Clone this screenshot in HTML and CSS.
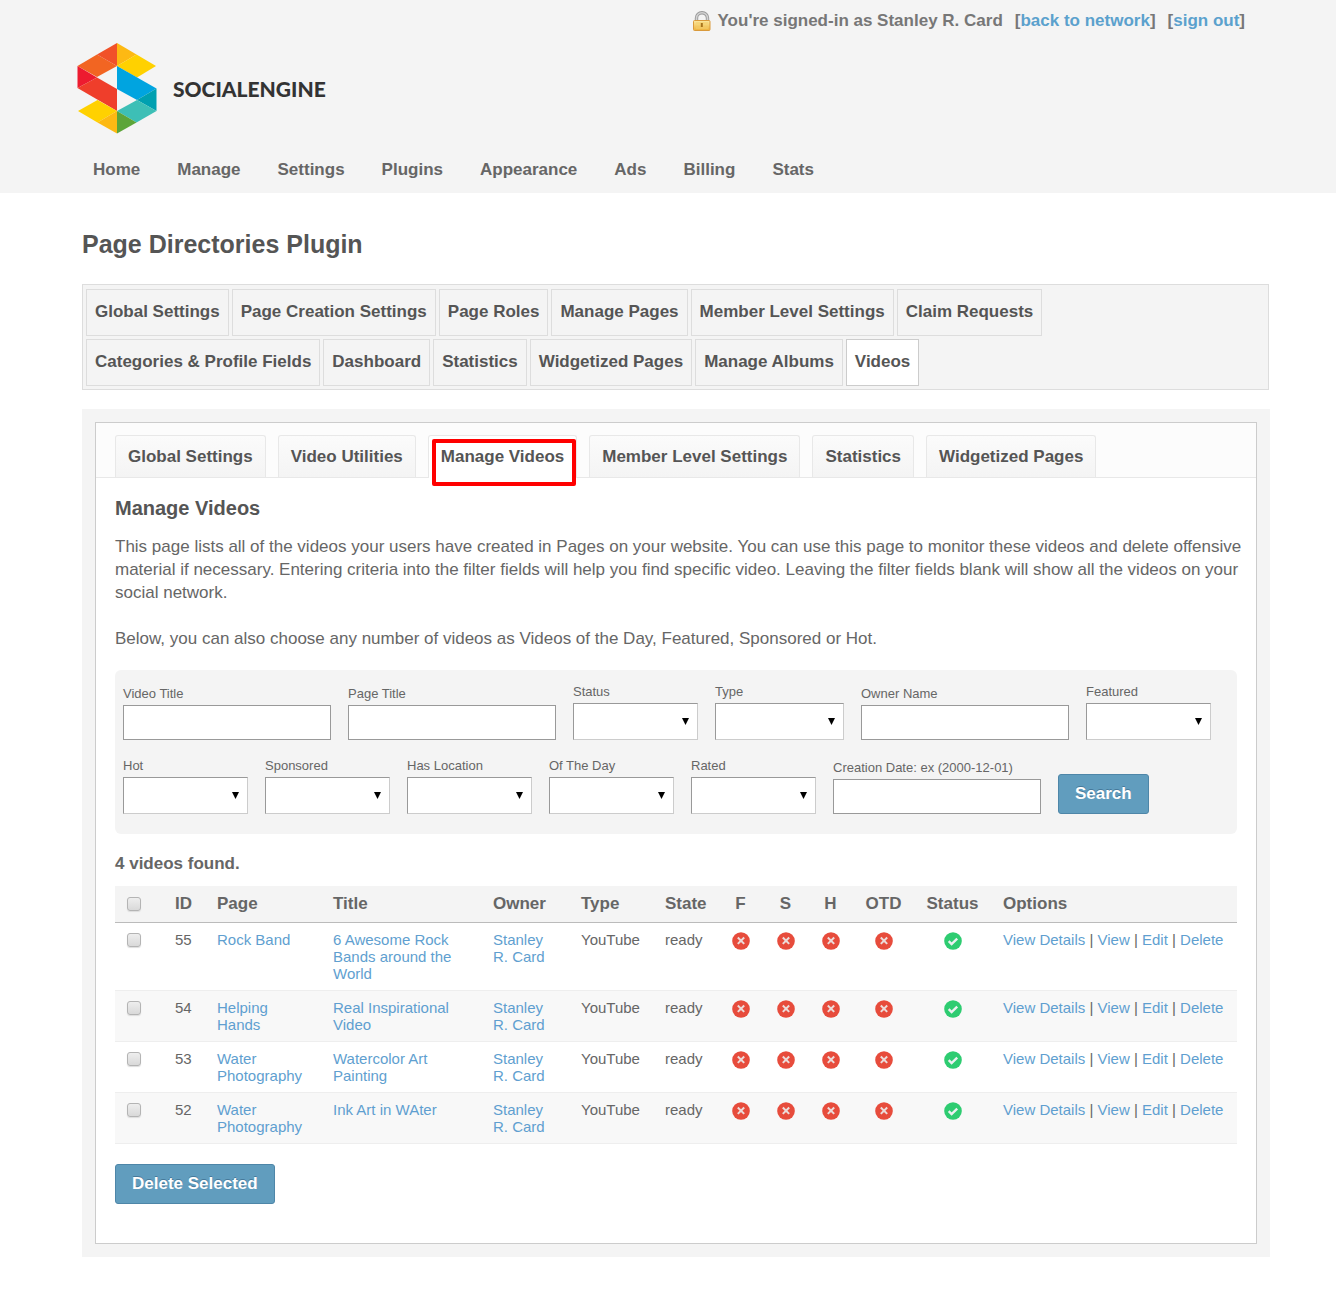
FILE: index.html
```html
<!DOCTYPE html>
<html lang="en">
<head>
  <meta charset="UTF-8">
  <meta name="viewport" content="width=device-width, initial-scale=1.0">
  <title>Page Directories Plugin - Manage Videos</title>
  <link rel="stylesheet" href="styles.css">
</head>
<body>

<!-- Icons used in the page -->
<svg class="sprite" aria-hidden="true">
  <linearGradient id="gold" x1="0" y1="0" x2="0" y2="1">
    <stop offset="0" stop-color="#fbe9a0"/>
    <stop offset="1" stop-color="#eeb13c"/>
  </linearGradient>
  <symbol id="no" viewBox="0 0 18 18">
    <circle cx="9" cy="9" r="8.8" fill="#e74c3c"/>
    <path d="M5.8 5.5l6.4 6.4M12.2 5.5l-6.4 6.4" stroke="#ecdcda" stroke-width="2" fill="none"/>
  </symbol>
  <symbol id="yes" viewBox="0 0 18 18">
    <circle cx="9" cy="9" r="8.8" fill="#2ecc71"/>
    <path d="M4.7 9.2l2.9 2.9 5.6-5.4" stroke="#ecf0f1" stroke-width="2.4" fill="none"/>
  </symbol>
</svg>

<header class="header">
  <div class="wrap">
    <div class="account">
      <svg class="lock" width="20" height="20" viewBox="0 0 20 20" aria-hidden="true">
        <path d="M4.5 11V7a5.5 5.3 0 0 1 11 0v4" fill="none" stroke="#999" stroke-width="3.4"/>
        <path d="M4.5 11V7a5.5 5.3 0 0 1 11 0v4" fill="none" stroke="#d2d2d2" stroke-width="1.6"/>
        <rect x="1.5" y="9.5" width="16.5" height="10" rx="1" fill="url(#gold)" stroke="#d99a3c"/>
        <path d="M4 12h12M4 14.500h12M4 17h12" stroke="#f3cf6c" stroke-width="1"/>
        <path d="M9.800 12v4" stroke="#a8741c" stroke-width="2"/>
      </svg>
      <span class="user">You're signed-in as Stanley R. Card</span>
      <span>[<a href="#">back to network</a>]</span>
      <span>[<a href="#">sign out</a>]</span>
    </div>
    <a class="logo" href="#">
      <svg width="80" height="92" viewBox="0 0 80 92" aria-hidden="true">
        <path d="M0.500 24L20 12.500 40 24 20 35z" fill="#f26522"/>
        <path d="M20 12.500L40 1v23z" fill="#f15129"/>
        <path d="M40 1l19.500 11.500L40 24z" fill="#fdb913"/>
        <path d="M59.500 12.500L79 24 60 35.500 40 24z" fill="#ffd100"/>
        <path d="M0.500 24L20 35.500 0.500 46z" fill="#ed1b2f"/>
        <path d="M20 35.500L40 47v22L0.500 46z" fill="#ef3e2b"/>
        <path d="M40 24l39.500 22.500L60 58 40 47z" fill="#00a4e0"/>
        <path d="M79.500 46.500V69L60 58z" fill="#00a0b0"/>
        <path d="M60 58l19.500 11L59.500 80.500 40 69z" fill="#3dbfb6"/>
        <path d="M20.500 58L40 69 20.500 80.500 1 69z" fill="#ffd100"/>
        <path d="M40 69v22.500l-19.500-11z" fill="#fdb913"/>
        <path d="M40 69l19.500 11.500L40 91.500z" fill="#5ca539"/>
      </svg>
      <span>SOCIALENGINE</span>
    </a>
    <nav class="main-menu">
      <a href="#">Home</a>
      <a href="#">Manage</a>
      <a href="#">Settings</a>
      <a href="#">Plugins</a>
      <a href="#">Appearance</a>
      <a href="#">Ads</a>
      <a href="#">Billing</a>
      <a href="#">Stats</a>
    </nav>
  </div>
</header>

<main class="wrap">
  <h1>Page Directories Plugin</h1>

  <nav class="plugin-menu">
    <div class="menu-row">
      <a href="#">Global Settings</a>
      <a href="#">Page Creation Settings</a>
      <a href="#">Page Roles</a>
      <a href="#">Manage Pages</a>
      <a href="#">Member Level Settings</a>
      <a href="#">Claim Requests</a>
    </div>
    <div class="menu-row">
      <a href="#">Categories &amp; Profile Fields</a>
      <a href="#">Dashboard</a>
      <a href="#">Statistics</a>
      <a href="#">Widgetized Pages</a>
      <a href="#">Manage Albums</a>
      <a href="#" class="active">Videos</a>
    </div>
  </nav>

  <div class="outer">
    <div class="panel">
      <nav class="tabs">
        <a href="#">Global Settings</a>
        <a href="#">Video Utilities</a>
        <a href="#" class="active">Manage Videos</a>
        <a href="#">Member Level Settings</a>
        <a href="#">Statistics</a>
        <a href="#">Widgetized Pages</a>
      </nav>

      <div class="content">
        <h2>Manage Videos</h2>
        <p>This page lists all of the videos your users have created in Pages on your website. You can use this page to monitor these videos and delete offensive material if necessary. Entering criteria into the filter fields will help you find specific video. Leaving the filter fields blank will show all the videos on your social network.</p>
        <p>Below, you can also choose any number of videos as Videos of the Day, Featured, Sponsored or Hot.</p>

        <!-- Filter form -->
        <form class="filters">
          <div class="field">
            <label for="video-title">Video Title</label>
            <input type="text" id="video-title">
          </div>
          <div class="field">
            <label for="page-title">Page Title</label>
            <input type="text" id="page-title">
          </div>
          <div class="field">
            <label for="status">Status</label>
            <select id="status"><option></option></select>
          </div>
          <div class="field">
            <label for="type">Type</label>
            <select id="type" class="wide"><option></option></select>
          </div>
          <div class="field">
            <label for="owner">Owner Name</label>
            <input type="text" id="owner">
          </div>
          <div class="field">
            <label for="featured">Featured</label>
            <select id="featured"><option></option></select>
          </div>
          <div class="field">
            <label for="hot">Hot</label>
            <select id="hot"><option></option></select>
          </div>
          <div class="field">
            <label for="sponsored">Sponsored</label>
            <select id="sponsored"><option></option></select>
          </div>
          <div class="field">
            <label for="location">Has Location</label>
            <select id="location"><option></option></select>
          </div>
          <div class="field">
            <label for="otd">Of The Day</label>
            <select id="otd"><option></option></select>
          </div>
          <div class="field">
            <label for="rated">Rated</label>
            <select id="rated"><option></option></select>
          </div>
          <div class="field">
            <label for="created">Creation Date: ex (2000-12-01)</label>
            <input type="text" id="created">
          </div>
          <button type="submit" class="btn">Search</button>
        </form>

        <div class="count">4 videos found.</div>

        <table class="videos">
          <colgroup>
            <col class="c-check"><col class="c-id"><col class="c-page"><col class="c-title"><col class="c-owner"><col class="c-type"><col class="c-state"><col class="c-flag"><col class="c-flag"><col class="c-flag"><col class="c-otd"><col class="c-status"><col>
          </colgroup>
          <thead>
            <tr>
              <th><input type="checkbox" aria-label="Select all"></th>
              <th>ID</th>
              <th>Page</th>
              <th>Title</th>
              <th>Owner</th>
              <th>Type</th>
              <th>State</th>
              <th class="mid">F</th>
              <th class="mid">S</th>
              <th class="mid">H</th>
              <th class="mid">OTD</th>
              <th class="mid">Status</th>
              <th>Options</th>
            </tr>
          </thead>
          <tbody>
            <tr>
              <td><input type="checkbox" aria-label="Select video 55"></td>
              <td>55</td>
              <td><a href="#">Rock Band</a></td>
              <td><a href="#">6 Awesome Rock Bands around the World</a></td>
              <td><a href="#">Stanley R. Card</a></td>
              <td>YouTube</td>
              <td>ready</td>
              <td class="mid"><svg class="icon"><use href="#no"/></svg></td>
              <td class="mid"><svg class="icon"><use href="#no"/></svg></td>
              <td class="mid"><svg class="icon"><use href="#no"/></svg></td>
              <td class="mid"><svg class="icon"><use href="#no"/></svg></td>
              <td class="mid"><svg class="icon"><use href="#yes"/></svg></td>
              <td class="options"><a href="#">View Details</a> | <a href="#">View</a> | <a href="#">Edit</a> | <a href="#">Delete</a></td>
            </tr>
            <tr>
              <td><input type="checkbox" aria-label="Select video 54"></td>
              <td>54</td>
              <td><a href="#">Helping Hands</a></td>
              <td><a href="#">Real Inspirational Video</a></td>
              <td><a href="#">Stanley R. Card</a></td>
              <td>YouTube</td>
              <td>ready</td>
              <td class="mid"><svg class="icon"><use href="#no"/></svg></td>
              <td class="mid"><svg class="icon"><use href="#no"/></svg></td>
              <td class="mid"><svg class="icon"><use href="#no"/></svg></td>
              <td class="mid"><svg class="icon"><use href="#no"/></svg></td>
              <td class="mid"><svg class="icon"><use href="#yes"/></svg></td>
              <td class="options"><a href="#">View Details</a> | <a href="#">View</a> | <a href="#">Edit</a> | <a href="#">Delete</a></td>
            </tr>
            <tr>
              <td><input type="checkbox" aria-label="Select video 53"></td>
              <td>53</td>
              <td><a href="#">Water Photography</a></td>
              <td><a href="#">Watercolor Art Painting</a></td>
              <td><a href="#">Stanley R. Card</a></td>
              <td>YouTube</td>
              <td>ready</td>
              <td class="mid"><svg class="icon"><use href="#no"/></svg></td>
              <td class="mid"><svg class="icon"><use href="#no"/></svg></td>
              <td class="mid"><svg class="icon"><use href="#no"/></svg></td>
              <td class="mid"><svg class="icon"><use href="#no"/></svg></td>
              <td class="mid"><svg class="icon"><use href="#yes"/></svg></td>
              <td class="options"><a href="#">View Details</a> | <a href="#">View</a> | <a href="#">Edit</a> | <a href="#">Delete</a></td>
            </tr>
            <tr>
              <td><input type="checkbox" aria-label="Select video 52"></td>
              <td>52</td>
              <td><a href="#">Water Photography</a></td>
              <td><a href="#">Ink Art in WAter</a></td>
              <td><a href="#">Stanley R. Card</a></td>
              <td>YouTube</td>
              <td>ready</td>
              <td class="mid"><svg class="icon"><use href="#no"/></svg></td>
              <td class="mid"><svg class="icon"><use href="#no"/></svg></td>
              <td class="mid"><svg class="icon"><use href="#no"/></svg></td>
              <td class="mid"><svg class="icon"><use href="#no"/></svg></td>
              <td class="mid"><svg class="icon"><use href="#yes"/></svg></td>
              <td class="options"><a href="#">View Details</a> | <a href="#">View</a> | <a href="#">Edit</a> | <a href="#">Delete</a></td>
            </tr>
          </tbody>
        </table>

        <button type="button" class="btn">Delete Selected</button>
      </div>
    </div>
  </div>
</main>

</body>
</html>
```
FILE: styles.css
```css
*, *::after {
  box-sizing: border-box;
}
body {
  margin: 0;
  font-family: "Liberation Sans", Arial, sans-serif;
  font-size: 17px;
  color: #666;
  background: #fff;
}
a {
  color: #5ba1cd;
  text-decoration: none;
}
.sprite {
  position: absolute;
  width: 0;
  height: 0;
}
.wrap {
  max-width: 1204px;
  margin: 0 auto;
  padding-left: 16px;
}

/* header */
.header {
  background: #f4f4f4;
}
.header .wrap {
  padding-left: 11px;
}
.account {
  display: flex;
  justify-content: flex-end;
  align-items: center;
  gap: 12px;
  height: 42px;
  padding-right: 25px;
  font-weight: bold;
  color: #777;
}
.account .lock {
  margin-right: -6px;
}
.logo {
  display: flex;
  align-items: center;
  gap: 16px;
  font-family: Lato, sans-serif;
  font-weight: 900;
  font-size: 21px;
  color: #333;
}
.main-menu {
  display: flex;
  gap: 37px;
  padding: 26px 16px 13px;
}
.main-menu a {
  font-weight: bold;
  line-height: 20px;
  color: #666;
}

h1 {
  margin: 36px 0 24px;
  font-size: 25px;
  line-height: 31px;
  color: #555;
}

/* plugin menu */
.plugin-menu {
  display: flex;
  flex-direction: column;
  gap: 3px;
  margin-right: 1px;
  padding: 4px 3px 3px;
  border: 1px solid #ddd;
  background: #f4f4f4;
}
.menu-row {
  display: flex;
  flex-wrap: wrap;
  gap: 3px;
}
.plugin-menu a {
  padding: 12px 8px 13px;
  border: 1px solid #ddd;
  font-weight: bold;
  line-height: 20px;
  color: #555;
}
.plugin-menu a.active {
  background: #fff;
  border-color: #ccc;
}

/* panel with tabs */
.outer {
  margin: 19px 0 44px;
  padding: 13px;
  background: #f4f4f4;
}
.panel {
  border: 1px solid #ccc;
  background: #fff;
}
.tabs {
  display: flex;
  gap: 12px;
  padding: 12px 19px 0;
  border-bottom: 1px solid #e8e8e8;
  background: #fcfcfc;
}
.tabs a {
  padding: 11px 12px 10px;
  border: 1px solid #e8e8e8;
  border-bottom: 0;
  border-radius: 3px 3px 0 0;
  background: linear-gradient(#fbfbfb, #f4f4f4);
  font-weight: bold;
  line-height: 20px;
  color: #555;
}
.tabs a.active {
  position: relative;
  margin-bottom: -1px;
  background: #fff;
}
.tabs a.active::after {
  content: "";
  position: absolute;
  top: 3px;
  left: 3px;
  right: 0;
  height: 47px;
  border: 4px solid #f00;
  border-radius: 2px;
}
.content {
  padding: 18px 19px 39px;
}
h2 {
  margin: 0 0 15px;
  font-size: 20px;
  line-height: 24px;
  color: #555;
}
p {
  margin: 0 -10px 23px 0;
  line-height: 23px;
}

/* filters */
.filters {
  display: flex;
  flex-wrap: wrap;
  align-items: flex-end;
  gap: 18px 17px;
  margin-top: -3px;
  padding: 14px 8px 20px;
  border-radius: 6px;
  background: #f4f4f4;
}
.field {
  display: flex;
  flex-direction: column;
  gap: 4px;
}
.field label {
  font-size: 13px;
  line-height: 15px;
}
.field input {
  width: 208px;
  height: 35px;
  border: 1px solid #999;
  background: #fff;
}
.field select {
  appearance: none;
  width: 125px;
  height: 37px;
  border: 1px solid;
  border-color: #999 #ccc #ccc #999;
  border-radius: 0;
  background: #fff url("data:image/svg+xml,%3Csvg xmlns='http://www.w3.org/2000/svg' width='7' height='7'%3E%3Cpath d='M0 0h7L3.500 7z'/%3E%3C/svg%3E") no-repeat right 8px center;
}
.field select.wide {
  width: 129px;
}
.btn {
  padding: 9px 16px;
  border: 1px solid #4e86a8;
  border-radius: 3px;
  background: #619dbe;
  font-family: inherit;
  font-weight: bold;
  font-size: 17px;
  line-height: 20px;
  color: #fff;
  text-shadow: 0 -1px 0 #46799a;
}

.count {
  margin: 20px 0 12px;
  font-weight: bold;
  line-height: 20px;
}

/* videos table */
.videos {
  width: 100%;
  margin-bottom: 20px;
  table-layout: fixed;
  border-collapse: collapse;
  font-size: 15px;
  line-height: 17px;
}
.videos th, .videos td {
  padding: 8px 10px 8px 12px;
  text-align: left;
  vertical-align: top;
}
.videos th {
  padding-top: 9px;
  padding-bottom: 10px;
  border-bottom: 1px solid #bbb;
  background: #f4f4f4;
  font-size: 17px;
}
.videos td {
  border-bottom: 1px solid #eee;
}
.videos a {
  color: #5f9fd0;
}
.videos tbody tr:nth-child(even) {
  background: #f8f8f8;
}
.videos .mid {
  padding-left: 0;
  padding-right: 0;
  text-align: center;
}
.videos .options {
  white-space: nowrap;
}
.c-check { width: 48px; }
.c-id { width: 42px; }
.c-page { width: 116px; }
.c-title { width: 160px; }
.c-owner { width: 88px; }
.c-type { width: 84px; }
.c-state { width: 65px; }
.c-flag { width: 45px; }
.c-otd { width: 61px; }
.c-status { width: 77px; }
.videos input {
  appearance: none;
  display: block;
  width: 14px;
  height: 14px;
  margin: 2px 0 0;
  border: 1px solid #b4b4b4;
  border-radius: 3px;
  background: linear-gradient(#eee, #d9d9d9);
  box-shadow: 0 1px 1px #ddd;
}
.icon {
  display: block;
  width: 18px;
  height: 18px;
  margin: 1px auto -2px;
}
```
